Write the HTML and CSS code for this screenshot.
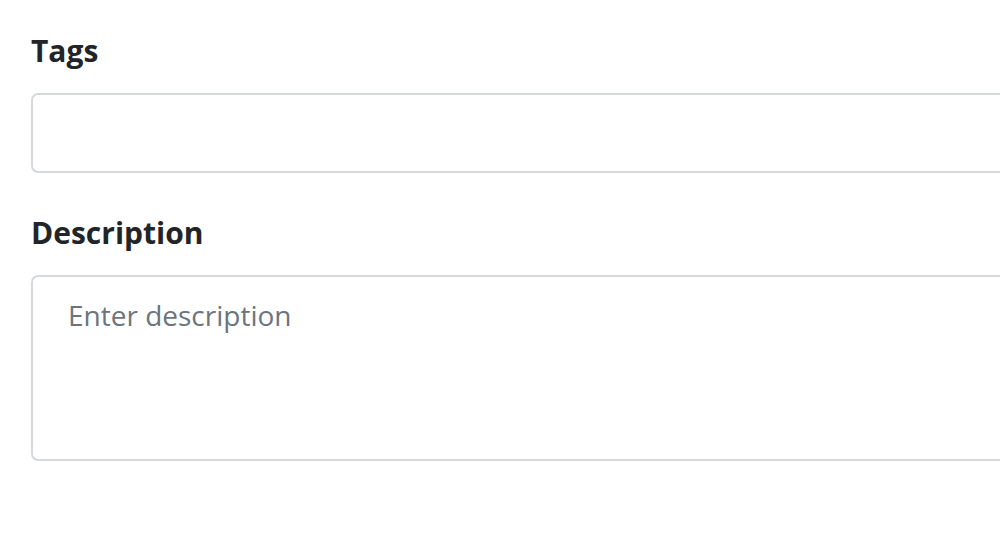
FILE: index.html
```html
<!DOCTYPE html>
<html>
<head>
<meta charset="utf-8">
<link rel="stylesheet" href="styles.css">
</head>
<body>
<form class="form">
  <div class="field">
    <label class="label" for="tags">Tags</label>
    <input class="input" id="tags" type="text">
  </div>
  <div class="field">
    <label class="label" for="desc">Description</label>
    <textarea class="textarea" id="desc" placeholder="Enter description"></textarea>
  </div>
</form>
</body>
</html>
```
FILE: styles.css
```css
html, body {
  margin: 0;
  padding: 0;
  background: #ffffff;
  overflow: hidden;
}
body {
  font-family: "Open Sans", "Noto Sans", sans-serif;
  width: 1000px;
  height: 560px;
}
.form {
  padding: 33px 0 0 31px;
  display: flex;
  flex-direction: column;
  gap: 42px;
}
.field {
  display: flex;
  flex-direction: column;
  gap: 24px;
}
.label {
  font-size: 30px;
  line-height: 36px;
  font-weight: 700;
  color: #212529;
}
.input, .textarea {
  box-sizing: border-box;
  width: 969px;
  border: 2px solid #d6d9dc;
  border-right: none;
  border-radius: 7px 0 0 7px;
  background: #fff;
  font-family: "Open Sans", "Noto Sans", sans-serif;
  font-size: 28px;
  line-height: 36px;
  color: #212529;
  margin: 0;
  outline: none;
}
.input {
  height: 80px;
  padding: 0 35px;
}
.textarea {
  height: 186px;
  padding: 20px 35px;
  resize: none;
}
.textarea::placeholder {
  color: #6c757d;
  opacity: 1;
}
```
